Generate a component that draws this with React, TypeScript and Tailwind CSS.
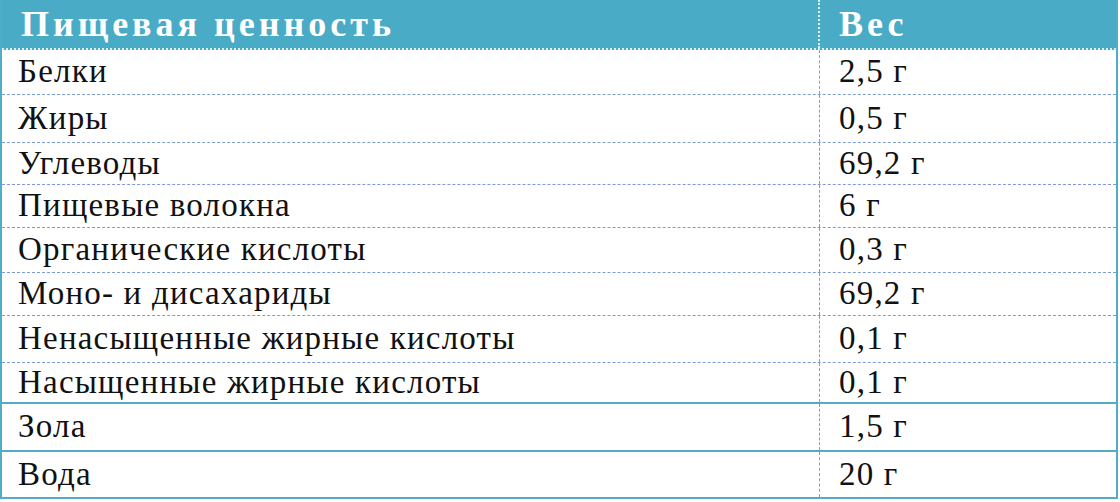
const rows: { name: string; value: string; h: string; solid?: boolean }[] = [
  { name: "Белки", value: "2,5 г", h: "h-[45px]" },
  { name: "Жиры", value: "0,5 г", h: "h-[48px]" },
  { name: "Углеводы", value: "69,2 г", h: "h-[42px]" },
  { name: "Пищевые волокна", value: "6 г", h: "h-[43px]" },
  { name: "Органические кислоты", value: "0,3 г", h: "h-[45px]" },
  { name: "Моно- и дисахариды", value: "69,2 г", h: "h-[43px]" },
  { name: "Ненасыщенные жирные кислоты", value: "0,1 г", h: "h-[47px]" },
  { name: "Насыщенные жирные кислоты", value: "0,1 г", h: "h-[41px]", solid: true },
  { name: "Зола", value: "1,5 г", h: "h-[48px]", solid: true },
  { name: "Вода", value: "20 г", h: "h-[45px]", solid: true },
];

export default function App() {
  return (
    <div className="w-[1120px] h-[502px] bg-white [font-family:'Liberation_Serif',serif] text-[#111]">
      <div className="w-[1118px] border-x-[2px] border-b-[2px] border-[#4fadc8]">
        {/* header */}
        <div className="flex h-[50px] bg-[#4aabc6] text-white font-bold text-[36px] tracking-[4px] border-b-[2px] border-dotted border-[#dbeef5]">
          <div className="w-[818px] flex items-center pl-[19px] border-r-[2px] border-dotted border-[#e3f2f7]">
            Пищевая ценность
          </div>
          <div className="flex-1 flex items-center pl-[19px]">Вес</div>
        </div>

        {rows.map((r, i) => (
          <div
            key={i}
            className={`flex text-[33px] tracking-[1.2px] ${r.h} ${
              i === rows.length - 1
                ? ""
                : r.solid
                  ? "border-b-[2px] border-solid border-[#4fadc8]"
                  : "border-b border-dashed border-[#7d9cd6]"
            }`}
          >
            <div className="w-[818px] flex items-center pl-[16px] border-r border-dashed border-[#7d9cd6]">
              {r.name}
            </div>
            <div className="flex-1 flex items-center pl-[19px]">{r.value}</div>
          </div>
        ))}
      </div>
    </div>
  );
}
